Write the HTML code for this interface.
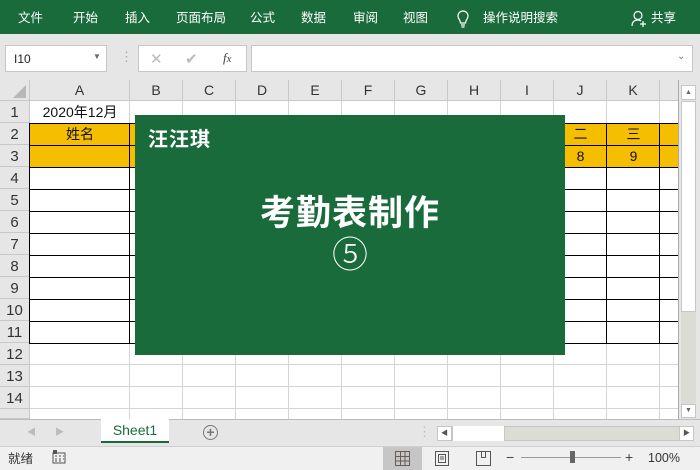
<!DOCTYPE html>
<html><head><meta charset="utf-8"><style>
*{margin:0;padding:0;box-sizing:border-box}
body{width:700px;height:470px;overflow:hidden;background:#e6e6e6;position:relative;font-family:"Liberation Sans","Noto Sans CJK SC",sans-serif;font-size:13px;color:#222}
.a{position:absolute}
.rib{left:0;top:0;width:700px;height:34px;background:#1a6b3b}
.rib span{position:absolute;top:10px;color:#fff;font-size:12.5px;line-height:16px}
.box{background:#fff;border:1px solid #c6c6c6}
.ch{top:80px;height:21px;background:#e6e6e6;border-right:1px solid #c8c8c8;border-bottom:1px solid #c8c8c8;text-align:center;line-height:21px;font-size:14px;color:#333}
.rh{left:0;width:30px;height:22px;background:#e6e6e6;border-bottom:1px solid #c8c8c8;border-right:1px solid #c8c8c8;text-align:center;line-height:24px;font-size:15px;color:#333}
.gv{width:1px;background:#d4d4d4}
.gh{height:1px;background:#d4d4d4}
.bv{width:1px;background:#000}
.bh{height:1px;background:#000}
.t{font-size:14px;text-align:center;line-height:22px;color:#111}
</style></head><body>
<div class="a rib">
<span style="left:18px">文件</span><span style="left:73px">开始</span><span style="left:125px">插入</span><span style="left:176px">页面布局</span><span style="left:250px">公式</span><span style="left:301px">数据</span><span style="left:353px">审阅</span><span style="left:403px">视图</span>
<svg class="a" style="left:456px;top:10px" width="14" height="18" viewBox="0 0 14 18"><path d="M4.5 13 C4.5 10 2 9 2 6 A5 5 0 0 1 12 6 C12 9 9.5 10 9.5 13 Z M5 15h4 M5.5 17h3" fill="none" stroke="#fff" stroke-width="1.2"/></svg>
<span style="left:483px">操作说明搜索</span>
<svg class="a" style="left:631px;top:10px" width="16" height="18" viewBox="0 0 16 18"><circle cx="7" cy="5.5" r="4" fill="none" stroke="#fff" stroke-width="1.2"/><path d="M1 16 C1 11 4 10 7 10 C8 10 9 10.3 10 11 M12 11v6 M9 14h6" fill="none" stroke="#fff" stroke-width="1.2"/></svg>
<span style="left:651px">共享</span>
</div>
<div class="a box" style="left:5px;top:45px;width:102px;height:27px"><span class="a" style="left:8px;top:6px;font-size:12px">I10</span><span class="a" style="left:87px;top:6px;font-size:8px;color:#666">▼</span></div>
<span class="a" style="left:120px;top:49px;color:#aaa;font-size:13px">⋮</span>
<div class="a box" style="left:138px;top:45px;width:109px;height:27px">
<span class="a" style="left:11px;top:4px;color:#bbb;font-size:15px">✕</span><span class="a" style="left:46px;top:4px;color:#bbb;font-size:15px">✔</span><span class="a" style="left:84px;top:4px;font-family:'Liberation Serif',serif;font-style:italic;font-size:13px;color:#444">f<small>x</small></span></div>
<div class="a box" style="left:251px;top:45px;width:442px;height:27px"><span class="a" style="left:425px;top:5px;font-size:10px;color:#777">⌄</span></div>
<div class="a" style="left:0;top:80px;width:679px;height:339px;background:#fff"></div>
<div class="a ch" style="left:0;width:30px"><svg class="a" style="left:13px;top:5px" width="13" height="13"><path d="M13 0V13H0Z" fill="#b8b8b8"/></svg></div>
<div class="a ch" style="left:30px;width:100px">A</div>
<div class="a ch" style="left:130px;width:53px">B</div>
<div class="a ch" style="left:183px;width:53px">C</div>
<div class="a ch" style="left:236px;width:53px">D</div>
<div class="a ch" style="left:289px;width:53px">E</div>
<div class="a ch" style="left:342px;width:53px">F</div>
<div class="a ch" style="left:395px;width:53px">G</div>
<div class="a ch" style="left:448px;width:53px">H</div>
<div class="a ch" style="left:501px;width:53px">I</div>
<div class="a ch" style="left:554px;width:53px">J</div>
<div class="a ch" style="left:607px;width:53px">K</div>
<div class="a ch" style="left:660px;width:19px"></div>
<div class="a rh" style="top:101px">1</div><div class="a rh" style="top:123px">2</div><div class="a rh" style="top:145px">3</div><div class="a rh" style="top:167px">4</div><div class="a rh" style="top:189px">5</div><div class="a rh" style="top:211px">6</div><div class="a rh" style="top:233px">7</div><div class="a rh" style="top:255px">8</div><div class="a rh" style="top:277px">9</div><div class="a rh" style="top:299px">10</div><div class="a rh" style="top:321px">11</div><div class="a rh" style="top:343px">12</div><div class="a rh" style="top:365px">13</div><div class="a rh" style="top:387px">14</div><div class="a rh" style="top:409px;height:10px"></div>
<div class="a gv" style="left:129px;top:101px;height:318px"></div><div class="a gv" style="left:182px;top:101px;height:318px"></div><div class="a gv" style="left:235px;top:101px;height:318px"></div><div class="a gv" style="left:288px;top:101px;height:318px"></div><div class="a gv" style="left:341px;top:101px;height:318px"></div><div class="a gv" style="left:394px;top:101px;height:318px"></div><div class="a gv" style="left:447px;top:101px;height:318px"></div><div class="a gv" style="left:500px;top:101px;height:318px"></div><div class="a gv" style="left:553px;top:101px;height:318px"></div><div class="a gv" style="left:606px;top:101px;height:318px"></div><div class="a gv" style="left:659px;top:101px;height:318px"></div>
<div class="a gh" style="left:30px;top:364px;width:649px"></div><div class="a gh" style="left:30px;top:386px;width:649px"></div><div class="a gh" style="left:30px;top:408px;width:649px"></div>
<div class="a" style="left:678px;top:80px;width:1px;height:339px;background:#aaa"></div>
<div class="a" style="left:30px;top:123px;width:648px;height:44px;background:#f5be00"></div>
<div class="a bh" style="left:29px;top:123px;width:649px"></div><div class="a bh" style="left:29px;top:145px;width:649px"></div><div class="a bh" style="left:29px;top:167px;width:649px"></div><div class="a bh" style="left:29px;top:189px;width:649px"></div><div class="a bh" style="left:29px;top:211px;width:649px"></div><div class="a bh" style="left:29px;top:233px;width:649px"></div><div class="a bh" style="left:29px;top:255px;width:649px"></div><div class="a bh" style="left:29px;top:277px;width:649px"></div><div class="a bh" style="left:29px;top:299px;width:649px"></div><div class="a bh" style="left:29px;top:321px;width:649px"></div><div class="a bh" style="left:29px;top:343px;width:649px"></div>
<div class="a bv" style="left:29px;top:123px;height:221px"></div><div class="a bv" style="left:129px;top:123px;height:221px"></div><div class="a bv" style="left:606px;top:123px;height:221px"></div><div class="a bv" style="left:659px;top:123px;height:221px"></div><div class="a bv" style="left:553px;top:123px;height:221px"></div>
<div class="a t" style="left:30px;top:101px;width:100px">2020年12月</div>
<div class="a t" style="left:30px;top:123px;width:100px">姓名</div>
<div class="a t" style="left:554px;top:123px;width:53px">二</div>
<div class="a t" style="left:607px;top:123px;width:53px">三</div>
<div class="a t" style="left:554px;top:145px;width:53px">8</div>
<div class="a t" style="left:607px;top:145px;width:53px">9</div>
<div class="a" style="left:135px;top:115px;width:430px;height:240px;background:#1a6b3b">
<div class="a" style="left:13px;top:14px;color:#fff;font-weight:bold;font-size:20px;line-height:22px;letter-spacing:1px">汪汪琪</div>
<div class="a" style="left:0;top:80px;width:430px;text-align:center;color:#fff;font-weight:bold;font-size:35px;line-height:38px;letter-spacing:1px">考勤表制作</div>
<div class="a" style="left:0;top:117px;width:430px;text-align:center;color:#fff;font-size:36px;line-height:40px;font-family:'Noto Sans CJK SC',sans-serif;font-weight:300">⑤</div>
</div>
<div class="a" style="left:679px;top:80px;width:21px;height:339px;background:#e6e6e6"></div>
<div class="a box" style="left:681px;top:85px;width:15px;height:15px;font-size:7px;text-align:center;line-height:13px;color:#666">▲</div>
<div class="a box" style="left:681px;top:101px;width:15px;height:211px"></div>
<div class="a" style="left:681px;top:312px;width:15px;height:92px;background:#dcdcd6"></div>
<div class="a box" style="left:681px;top:404px;width:15px;height:14px;font-size:7px;text-align:center;line-height:12px;color:#666">▼</div>
<div class="a" style="left:0;top:419px;width:700px;height:1px;background:#bbb"></div>
<span class="a" style="left:27px;top:425px;color:#bbb;font-size:9px">◀</span><span class="a" style="left:55px;top:425px;color:#bbb;font-size:9px">▶</span>
<div class="a" style="left:101px;top:419px;width:68px;height:24px;background:#fff;border-bottom:2px solid #1a6b3b;color:#1a6b3b;text-align:center;line-height:22px;font-size:14px">Sheet1</div>
<div class="a" style="left:203px;top:425px;width:15px;height:15px;border:1.3px solid #777;border-radius:50%;text-align:center;line-height:12px;font-size:14px;color:#777;font-weight:bold">+</div>
<span class="a" style="left:418px;top:424px;color:#bbb;font-size:13px">⋮</span>
<div class="a box" style="left:437px;top:426px;width:257px;height:15px;background:#dcdcd6"></div>
<div class="a box" style="left:437px;top:426px;width:15px;height:15px;font-size:7px;text-align:center;line-height:13px;color:#555">◀</div>
<div class="a box" style="left:452px;top:426px;width:53px;height:15px;border-top:none;border-bottom:none"></div>
<div class="a box" style="left:679px;top:426px;width:15px;height:15px;font-size:7px;text-align:center;line-height:13px;color:#555">▶</div>
<div class="a" style="left:0;top:446px;width:700px;height:24px;background:#f0f0f0;border-top:1px solid #d0d0d0"></div>
<span class="a" style="left:8px;top:448px;font-size:12.5px;color:#333">就绪</span>
<svg class="a" style="left:52px;top:450px" width="14" height="14"><rect x="1" y="3" width="12" height="10" fill="none" stroke="#555"/><path d="M3 6h2M7 6h2M11 6h1M3 9h2M7 9h2M11 9h1M3 11h2M7 11h2" stroke="#555"/><rect x="1" y="0" width="4" height="4" fill="#555"/></svg>
<div class="a" style="left:383px;top:447px;width:39px;height:23px;background:#c6c6c6"></div>
<svg class="a" style="left:395px;top:451px" width="15" height="15"><path d="M.5 .5h14v14H.5zM5.5 .5v14M10 .5v14M.5 5.5h14M.5 10h14" fill="none" stroke="#6b5a55"/></svg>
<svg class="a" style="left:435px;top:451px" width="14" height="15"><path d="M.5 .5h13v14H.5zM3.5 3.5h7v8h-7zM5 6h4M5 8h4" fill="none" stroke="#555"/></svg>
<svg class="a" style="left:476px;top:451px" width="15" height="15"><path d="M.5 .5h14v14H.5zM5.5 .5v6h4v-6" fill="none" stroke="#555"/></svg>
<span class="a" style="left:506px;top:449px;font-size:14px;color:#444">−</span>
<div class="a" style="left:521px;top:457px;width:100px;height:1px;background:#999"></div>
<div class="a" style="left:570px;top:451px;width:5px;height:12px;background:#666"></div>
<span class="a" style="left:625px;top:449px;font-size:14px;color:#444">+</span>
<span class="a" style="left:648px;top:451px;font-size:12.5px;color:#333">100%</span>
</body></html>
